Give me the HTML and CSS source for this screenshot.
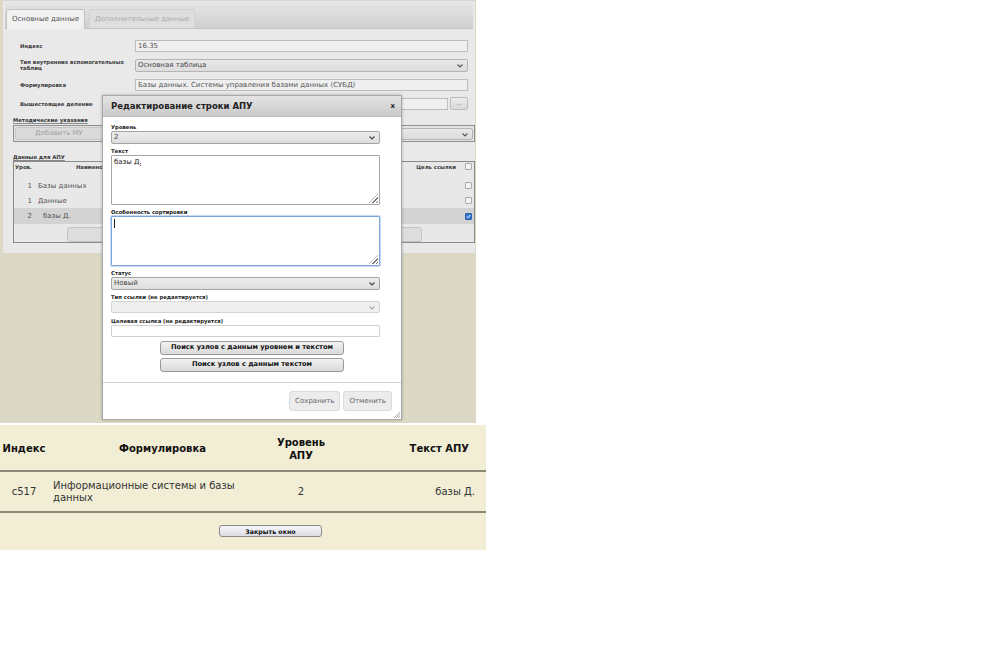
FILE: index.html
```html
<!DOCTYPE html>
<html lang="ru">
  <head>
    <meta charset="UTF-8" />
    <title>Редактирование строки АПУ</title>
    <link rel="stylesheet" href="styles.css">
  </head>
  <body>
    <!-- Editor screenshot -->
    <div class="shot">
      <div class="panel">
        <div class="tabs">
          <span class="tab active">Основные данные</span>
          <span class="tab">Дополнительные данные</span>
        </div>

        <div class="fields">
          <div class="row">
            <span class="lbl">Индекс</span>
            <div class="inp">16.35</div>
          </div>
          <div class="row">
            <span class="lbl">Тип внутренних вспомогательных таблиц</span>
            <div class="sel">Основная таблица
              <svg class="chev" width="6" height="4" viewBox="0 0 6 4"><polyline points="0.5,0.5 3,3 5.5,0.5" fill="none" stroke="#555" stroke-width="1.1"/></svg>
            </div>
          </div>
          <div class="row">
            <span class="lbl">Формулировка</span>
            <div class="inp">Базы данных. Системы управления базами данных (СУБД)</div>
          </div>
          <div class="row">
            <span class="lbl">Вышестоящее деление</span>
            <div class="inp-pick">
              <div class="inp"></div>
              <span class="pick">...</span>
            </div>
          </div>
        </div>

        <div class="group-title">Методические указания</div>
        <div class="group">
          <span class="btn-mu">Добавить МУ</span>
          <div class="sel sel-mu">
            <svg class="chev" width="6" height="4" viewBox="0 0 6 4"><polyline points="0.5,0.5 3,3 5.5,0.5" fill="none" stroke="#555" stroke-width="1.1"/></svg>
          </div>
        </div>

        <div class="group-title title-apu">Данные для АПУ</div>
        <div class="grid-box">
          <div class="grid-head">
            <span class="h-lvl">Уров.</span>
            <span class="h-name">Наименование</span>
            <span class="h-link">Цель ссылки</span>
            <span class="chk"></span>
          </div>
          <div class="tr">
            <span class="c-num">1</span><span class="c-text">Базы данных</span>
            <span class="chk"></span>
          </div>
          <div class="tr">
            <span class="c-num">1</span><span class="c-text">Данные</span>
            <span class="chk"></span>
          </div>
          <div class="tr selected">
            <span class="c-num">2</span><span class="c-text sub">базы Д.</span>
            <span class="chk checked">
              <svg width="5" height="5" viewBox="0 0 5 5"><polyline points="0.8,2.6 2,3.8 4.2,1" fill="none" stroke="#fff" stroke-width="1"/></svg>
            </span>
          </div>
          <div class="grid-actions">
            <span class="g-btn g-btn-left"></span>
            <span class="g-btn g-btn-right"></span>
          </div>
        </div>
      </div>

      <!-- Modal dialog -->
      <div class="modal">
        <div class="modal-head">
          <span class="modal-title">Редактирование строки АПУ</span>
          <span class="modal-close">x</span>
        </div>
        <div class="modal-body">
          <div class="m-lbl first">Уровень</div>
          <div class="sel m-sel">2
            <svg class="chev" width="6" height="4" viewBox="0 0 6 4"><polyline points="0.5,0.5 3,3 5.5,0.5" fill="none" stroke="#444" stroke-width="1.1"/></svg>
          </div>

          <div class="m-lbl">Текст</div>
          <div class="area">базы <span class="typo">Д.</span><span class="grip"></span></div>

          <div class="m-lbl">Особенность сортировки</div>
          <div class="area focus"><span class="caret"></span><span class="grip"></span></div>

          <div class="m-lbl">Статус</div>
          <div class="sel m-sel">Новый
            <svg class="chev" width="6" height="4" viewBox="0 0 6 4"><polyline points="0.5,0.5 3,3 5.5,0.5" fill="none" stroke="#444" stroke-width="1.1"/></svg>
          </div>

          <div class="m-lbl">Тип ссылки (не редактируется)</div>
          <div class="sel m-sel disabled">
            <svg class="chev" width="6" height="4" viewBox="0 0 6 4"><polyline points="0.5,0.5 3,3 5.5,0.5" fill="none" stroke="#aaa" stroke-width="1.1"/></svg>
          </div>

          <div class="m-lbl last">Целевая ссылка (не редактируется)</div>
          <div class="m-inp"></div>

          <div class="search">
            <span class="s-btn">Поиск узлов с данным уровнем и текстом</span>
            <span class="s-btn">Поиск узлов с данным текстом</span>
          </div>
        </div>
        <div class="modal-foot">
          <span class="f-btn">Сохранить</span>
          <span class="f-btn">Отменить</span>
        </div>
        <svg class="resize" width="6" height="6" viewBox="0 0 6 6">
          <path d="M6 0L0 6M6 2L2 6M6 4L4 6" stroke="#999" stroke-width="0.8"/>
        </svg>
      </div>
    </div>

    <!-- Result table -->
    <div class="result">
      <table class="res-table">
        <thead>
          <tr>
            <th class="col-idx">Индекс</th>
            <th class="col-form">Формулировка</th>
            <th class="col-lvl">Уровень<br>АПУ</th>
            <th class="col-text">Текст АПУ</th>
          </tr>
        </thead>
        <tbody>
          <tr>
            <td class="col-idx">c517</td>
            <td class="col-form">Информационные системы и базы данных</td>
            <td class="col-lvl">2</td>
            <td class="col-text">базы Д.</td>
          </tr>
        </tbody>
      </table>
      <div class="res-actions">
        <button class="close-btn">Закрыть окно</button>
      </div>
    </div>
  </body>
</html>
```

FILE: styles.css
```css
/* Base */
* {
  margin: 0;
  padding: 0;
  box-sizing: border-box;
}

body {
  background-color: white;
  font-family: "DejaVu Sans", Verdana, sans-serif;
  color: #333;
}

/* Screenshot area */
.shot {
  position: relative;
  width: 476px;
  height: 423px;
  background-color: #dbd9c5;
}

.panel {
  margin-left: 3px;
  width: 472px;
  height: 253px;
  background-color: #e9e9e9;
  border-top: 1px solid #d6d6d6;
}

.tabs {
  display: flex;
  align-items: flex-end;
  gap: 4px;
  height: 27px;
  margin: 1px 2px 0;
  padding-left: 1px;
  background: linear-gradient(#e6e6e6, #cfcfcf);
  border-bottom: 1px solid #c4c4c4;
}

.tab {
  height: 19px;
  padding: 0 5px;
  font-size: 7px;
  line-height: 19px;
  color: #aaa;
  background-color: #dedede;
  border: 1px solid #d2d2d2;
  border-bottom: none;
  border-radius: 2px 2px 0 0;
}

.tab.active {
  height: 20px;
  margin-bottom: -1px;
  color: #555;
  background-color: #f1f1f1;
  border-color: #c2c2c2;
}

/* Form rows */
.fields {
  padding: 7px 0 0 17px;
}

.row {
  display: grid;
  grid-template-columns: 115px 333px;
  align-items: center;
  height: 19.5px;
}

.lbl {
  font-size: 5.3px;
  font-weight: bold;
  line-height: 6.5px;
  color: #3a3a3a;
  padding-right: 8px;
}

.inp {
  height: 12px;
  padding-left: 2px;
  font-size: 7px;
  line-height: 10px;
  color: #555;
  background-color: #efefef;
  border: 1px solid #bdbdbd;
}

.sel {
  position: relative;
  height: 13px;
  padding-left: 2px;
  font-size: 7px;
  line-height: 11px;
  color: #444;
  background: linear-gradient(#e9e9e9, #dcdcdc);
  border: 1px solid #b4b4b4;
  border-radius: 2px;
}

.chev {
  position: absolute;
  right: 4px;
  top: 4px;
}

.inp-pick {
  display: flex;
  gap: 2px;
}

.inp-pick .inp {
  flex: 1;
}

.pick {
  width: 18px;
  height: 13px;
  margin-top: -1px;
  font-size: 6px;
  line-height: 10px;
  text-align: center;
  color: #888;
  background: linear-gradient(#ececec, #d8d8d8);
  border: 1px solid #bdbdbd;
  border-radius: 2px;
}

/* Groups */
.group-title {
  margin: 3px 0 0 10px;
  font-size: 5.3px;
  font-weight: bold;
  line-height: 7px;
  color: #333;
  text-decoration: underline;
  text-decoration-color: #888;
}

.title-apu {
  margin-top: 12px;
}

.group {
  display: flex;
  align-items: center;
  gap: 4px;
  width: 462px;
  height: 17px;
  margin: 1px 0 0 10px;
  padding: 0 1px;
  background-color: #e3e3e3;
  border: 1px solid #8f8f8f;
}

.btn-mu {
  width: 88px;
  height: 13px;
  font-size: 7px;
  line-height: 11px;
  text-align: center;
  color: #a0a0a0;
  background-color: #dadada;
  border: 1px solid #c6c6c6;
  border-radius: 2px;
}

.sel-mu {
  flex: 1;
  height: 12px;
}

.grid-box {
  width: 462px;
  height: 82px;
  margin-left: 10px;
  padding: 0 1px;
  background-color: #e8e8e8;
  border: 1px solid #8a8a8a;
}

.grid-head {
  display: flex;
  align-items: center;
  height: 9px;
  font-size: 5.3px;
  font-weight: bold;
  color: #3a3a3a;
}

/* header text runs under the dialog, only its start is visible */
.h-name {
  width: 27px;
  margin-left: 44px;
  overflow: hidden;
  white-space: nowrap;
}

.h-link {
  margin-left: auto;
  margin-right: 9px;
}

.chk {
  display: inline-flex;
  align-items: center;
  justify-content: center;
  width: 7px;
  height: 7px;
  margin-right: 1px;
  background-color: #f4f4f4;
  border: 1px solid #a8a8a8;
  border-radius: 1px;
}

.chk.checked {
  background-color: #2f74d0;
  border-color: #2a62b0;
}

.tr {
  display: flex;
  align-items: center;
  height: 15px;
  font-size: 7px;
  color: #555;
}

.grid-head + .tr {
  margin-top: 7px;
}

.tr.selected {
  height: 16px;
  margin: 0 -1px;
  padding: 0 1px;
  background-color: #d3d3d3;
}

.c-num {
  width: 17px;
  text-align: right;
}

.c-text {
  margin-left: 6px;
}

.c-text.sub {
  margin-left: 11px;
}

.tr .chk {
  margin-left: auto;
}

.grid-actions {
  display: flex;
  margin-top: 3px;
  height: 15px;
}

.g-btn {
  height: 15px;
  background-color: #dedede;
  border: 1px solid #c4c4c4;
  border-radius: 3px;
}

.g-btn-left {
  width: 110px;
  margin-left: 52px;
}

.g-btn-right {
  width: 100px;
  margin-left: 145px;
}

/* Modal */
.modal {
  position: absolute;
  left: 102px;
  top: 95px;
  width: 300px;
  height: 325px;
  background-color: white;
  border: 1px solid #a8a8a8;
  box-shadow: 0 0 3px rgba(0, 0, 0, 0.25);
}

.modal-head {
  display: flex;
  align-items: center;
  justify-content: space-between;
  height: 21px;
  padding: 0 6px 0 8px;
  background: linear-gradient(#e4e4e4, #c9c9c9);
  border-bottom: 1px solid #bcbcbc;
}

.modal-title {
  font-size: 8.5px;
  font-weight: bold;
  color: #222;
}

.modal-close {
  font-size: 7px;
  font-weight: bold;
  color: #222;
}

.modal-body {
  padding: 0 21px 0 8px;
}

.m-lbl {
  margin-top: 3px;
  font-size: 5.3px;
  font-weight: bold;
  line-height: 8px;
  color: #222;
}

.m-lbl.first {
  margin-top: 6px;
}

.m-lbl.last {
  margin-top: 4px;
}

.m-sel {
  height: 13px;
  background: linear-gradient(#ececec, #dedede);
  border-color: #a4a4a4;
}

.m-sel.disabled {
  height: 12px;
  background: #efefef;
  border-color: #d4d4d4;
}

.area {
  position: relative;
  height: 50px;
  padding: 1px 2px;
  font-size: 7px;
  line-height: 10px;
  color: #222;
  border: 1px solid #a6a6a6;
  border-radius: 1px;
}

.area.focus {
  border-color: #7da4dc;
  box-shadow: 0 0 0 1px #c9dbf3;
}

.typo {
  text-decoration: underline dotted #d22;
  text-underline-offset: 1px;
}

.caret {
  display: inline-block;
  width: 1px;
  height: 9px;
  margin-top: 1px;
  background-color: #222;
}

.grip {
  position: absolute;
  right: 1px;
  bottom: 1px;
  width: 9px;
  height: 9px;
  background: repeating-linear-gradient(135deg, transparent 0 1.5px, #777 1.5px 2.3px);
  clip-path: polygon(100% 0, 100% 100%, 0 100%);
}

.m-inp {
  height: 12px;
  border: 1px solid #d0d0d0;
  border-radius: 1px;
}

.search {
  display: flex;
  flex-direction: column;
  align-items: center;
  gap: 3.5px;
  margin: 4px -21px 0 -8px;
}

.s-btn {
  width: 184px;
  height: 13.5px;
  font-size: 6.7px;
  font-weight: bold;
  line-height: 11.5px;
  text-align: center;
  color: #111;
  background: linear-gradient(#f2f2f2, #d9d9d9);
  border: 1px solid #9a9a9a;
  border-radius: 3px;
}

.modal-foot {
  display: flex;
  justify-content: flex-end;
  gap: 3px;
  margin-top: 10px;
  padding: 8px 9px 0 0;
  border-top: 1px solid #d2d2d2;
}

.f-btn {
  height: 20px;
  padding: 0 5px;
  font-size: 7px;
  line-height: 18px;
  color: #666;
  background-color: #ececec;
  border: 1px solid #dadada;
  border-radius: 3px;
}

.resize {
  position: absolute;
  right: 1px;
  bottom: 1px;
}

/* Result table */
.result {
  width: 486px;
  height: 125px;
  margin-top: 2px;
  background-color: #f1eed5;
}

.res-table {
  width: 100%;
  border-collapse: collapse;
  font-size: 10px;
}

.res-table th {
  height: 46px;
  padding-top: 2px;
  font-weight: bold;
  line-height: 13px;
  color: #111;
  border-bottom: 2px solid #8a8a79;
}

.res-table td {
  height: 41px;
  line-height: 12px;
  color: #333;
  border-bottom: 2px solid #8a8a79;
}

.col-idx {
  width: 48px;
  text-align: center;
}

th.col-form {
  width: 229px;
  text-align: center;
}

td.col-form {
  padding-left: 5px;
  text-align: left;
}

.col-lvl {
  width: 48px;
  text-align: center;
}

th.col-text {
  padding-right: 17px;
  text-align: right;
}

td.col-text {
  padding-right: 11px;
  text-align: right;
}

.res-actions {
  padding: 12px 0 0 219px;
}

.close-btn {
  display: block;
  width: 103px;
  height: 12px;
  font-family: "DejaVu Sans", Verdana, sans-serif;
  font-size: 6.3px;
  font-weight: bold;
  color: #111;
  background: linear-gradient(#f6f6fa, #dcdce4);
  border: 1px solid #8a8a8a;
  border-radius: 3px;
}
```
